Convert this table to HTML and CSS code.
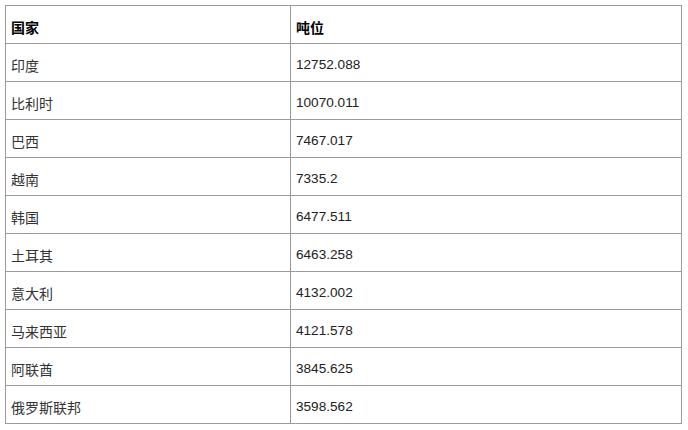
FILE: index.html
```html
<!DOCTYPE html>
<html lang="zh-CN">
<head>
<meta charset="utf-8">
<link rel="stylesheet" href="styles.css">
</head>
<body>
<div class="wrap">
<table class="data">
<thead>
<tr><th class="c1">国家</th><th class="c2">吨位</th></tr>
</thead>
<tbody>
<tr><td>印度</td><td class="num">12752.088</td></tr>
<tr><td>比利时</td><td class="num">10070.011</td></tr>
<tr><td>巴西</td><td class="num">7467.017</td></tr>
<tr><td>越南</td><td class="num">7335.2</td></tr>
<tr><td>韩国</td><td class="num">6477.511</td></tr>
<tr><td>土耳其</td><td class="num">6463.258</td></tr>
<tr><td>意大利</td><td class="num">4132.002</td></tr>
<tr><td>马来西亚</td><td class="num">4121.578</td></tr>
<tr><td>阿联酋</td><td class="num">3845.625</td></tr>
<tr><td>俄罗斯联邦</td><td class="num">3598.562</td></tr>
</tbody>
</table>
</div>
</body>
</html>
```
FILE: styles.css
```css
html, body {
  margin: 0;
  padding: 0;
  background: #fff;
}
.wrap {
  padding: 5px;
}
.data {
  border-collapse: collapse;
  width: 677px;
  table-layout: fixed;
  font-family: "Liberation Sans", "Noto Sans CJK SC", sans-serif;
  font-size: 14px;
  color: #333;
}
.data th, .data td {
  border: 1px solid #9a9a9a;
  height: 37px;
  padding: 4px 5px 0 5px;
  box-sizing: border-box;
  text-align: left;
  vertical-align: middle;
}
.data tr {
  height: 38px;
}
.data th {
  font-weight: bold;
  color: #000;
}
.data .num {
  font-size: 13.6px;
  color: #222;
}
.data .c1 {
  width: 285px;
}
```
